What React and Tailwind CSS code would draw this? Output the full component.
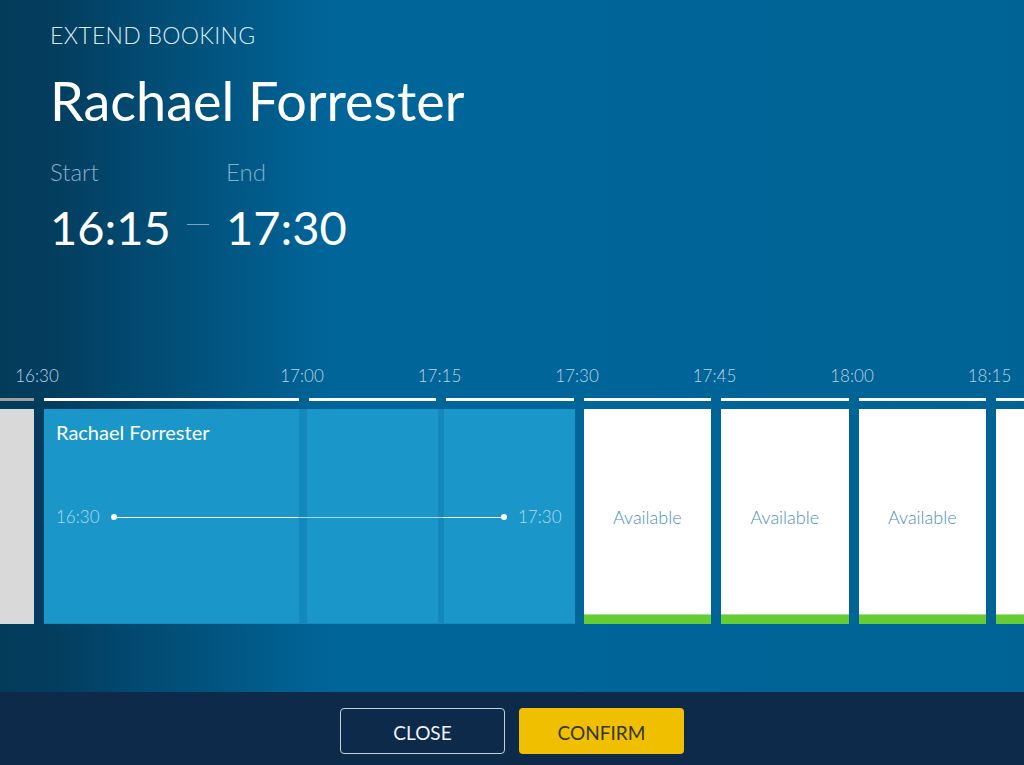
import React from "react";

function AvailableCol({ text = true }) {
  return (
    <div className="flex w-[127.5px] shrink-0 flex-col">
      <div className="h-[3px] bg-white" />
      <div className="mt-[8px] flex h-[215px] flex-col bg-white">
        <div className="flex flex-1 items-center justify-center pt-[11px] text-[18px] font-light text-[#4b8fbc]">
          {text ? "Available" : ""}
        </div>
        <div className="h-[10px] border-t border-[#a8e08c] bg-[#66cc33]" />
      </div>
    </div>
  );
}

export default function App() {
  const labels = ["17:00", "17:15", "17:30", "17:45", "18:00", "18:15"];
  return (
    <div className="flex h-[765px] w-[1024px] flex-col overflow-hidden font-['Lato',sans-serif]">
      <div className="flex h-[692px] flex-col bg-[linear-gradient(to_right,#033b5b_0%,#033d5e_5%,#00669a_33%,#006396_100%)]">
        <div className="pl-[50px] pt-[21px]">
          <div className="h-[28px] text-[23px] font-light leading-[28px] tracking-[0.3px] text-[#dfe9f1]">
            EXTEND BOOKING
          </div>
          <div className="mt-[20px] h-[64px] text-[54px] leading-[64px] text-white">
            Rachael Forrester
          </div>
          <div className="mt-[25px] flex h-[28px] text-[24px] font-light leading-[28px] text-[#86aecb]">
            <div className="w-[176px]">Start</div>
            <div>End</div>
          </div>
          <div className="mt-[13px] flex h-[56px] text-[47px] leading-[56px] text-white">
            <div className="flex w-[176px] items-start">
              <span>16:15</span>
              <span className="ml-auto mr-[17px] mt-[24.5px] h-[1.5px] w-[22px] bg-[#7aa3c0]" />
            </div>
            <div>17:30</div>
          </div>
        </div>

        <div className="ml-[-1.5px] mt-[111px] flex h-[20px] text-[17px] font-light leading-[20px] text-[#bcd2e1]">
          <div className="w-[77px] shrink-0 text-center">16:30</div>
          <div className="w-[157.75px] shrink-0" />
          {labels.map((l) => (
            <div key={l} className="w-[137.5px] shrink-0 text-center">
              {l}
            </div>
          ))}
        </div>

        <div className="mt-[12px] flex">
          <div className="flex w-[33.5px] shrink-0 flex-col">
            <div className="h-[3px] bg-[#9e9e9e]" />
            <div className="mt-[8px] h-[215px] bg-[#d9d9d9]" />
          </div>

          <div className="ml-[10.5px] flex w-[531px] shrink-0 flex-col">
            <div className="flex h-[3px] gap-[10px]">
              <div className="w-[254.5px] bg-white" />
              <div className="w-[127.5px] bg-white" />
              <div className="w-[127.5px] bg-white" />
            </div>
            <div className="relative mt-[8px] flex h-[215px] border-b border-[#1688ba]">
              <div className="w-[255px] bg-[#1a97c8]" />
              <div className="w-[8px] bg-[#1388ba]" />
              <div className="w-[131px] bg-[#1a97c8]" />
              <div className="w-[6px] bg-[#1388ba]" />
              <div className="flex-1 bg-[#1a97c8]" />

              <div className="absolute left-[12px] top-[11px] text-[20px] leading-[24px] text-white">
                Rachael Forrester
              </div>
              <div className="absolute left-[12px] top-[98px] flex h-[20px] items-center text-[17px] font-light leading-[20px] text-[#b2dbef]">
                <span className="w-[45px]">16:30</span>
                <span className="ml-[10px] h-[6px] w-[6px] rounded-full bg-white" />
                <span className="h-px w-[181px] bg-white" />
                <span className="h-px w-[145px] bg-[#a6d6ee]" />
                <span className="h-px w-[58px] bg-white" />
                <span className="h-[6px] w-[6px] rounded-full bg-white" />
                <span className="ml-[11px]">17:30</span>
              </div>
            </div>
          </div>

          <div className="ml-[8.5px] flex shrink-0 gap-[10px]">
            <AvailableCol />
            <AvailableCol />
            <AvailableCol />
            <AvailableCol text={false} />
          </div>
        </div>
      </div>

      <div className="flex h-[73px] justify-center gap-[14px] bg-[#0e2a4a] pt-[16px]">
        <button className="h-[46px] w-[165px] rounded-[4px] border border-[#c5cfd8] pt-[5px] text-[19px] text-[#eef3f7]">
          CLOSE
        </button>
        <button className="h-[46px] w-[165px] rounded-[4px] bg-[#f0c000] pt-[5px] text-[19px] text-[#33352f]">
          CONFIRM
        </button>
      </div>
    </div>
  );
}
